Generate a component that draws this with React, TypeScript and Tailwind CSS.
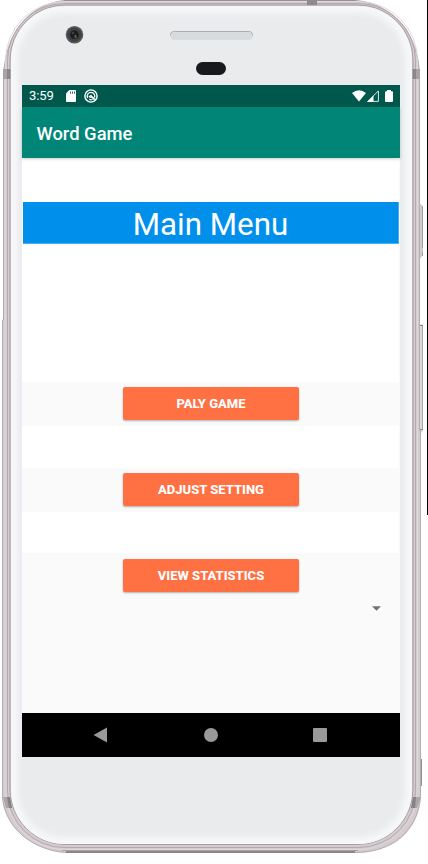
import React from "react";

function DeviceFrame() {
  return (
    <svg className="absolute inset-0" width="428" height="864" viewBox="0 0 428 864" aria-hidden="true">
      <defs>
        <filter id="soft" x="-5%" y="-5%" width="110%" height="110%" colorInterpolationFilters="sRGB">
          <feGaussianBlur stdDeviation="3" />
        </filter>
        <clipPath id="face">
          <rect x="11" y="6" width="401" height="838" rx="54" />
        </clipPath>
      </defs>
      {/* side keys */}
      <path d="M419 204h2l2 3v47l-2 4h-2z" fill="#cdcfcf" />
      <path d="M422.500 206v42M422.500 252v4" stroke="#9b9f9e" />
      <path d="M419 324h3l1 2v105l-2 2h-2z" fill="#d9dddc" />
      <path d="M422.500 326v104" stroke="#a3a7a5" />
      <path d="M419 325.500h4M419 429.500h4" stroke="#858886" />
      <path d="M421.500 759v27" stroke="#929292" />
      {/* metal rim */}
      <path d="M64 0H356C394 4 420 34 420 78V430H421V796C419 832 392 853 355 853H66C30 850 3 825 2 795V320H3V78C5 32 29 5 64 0Z" fill="#d4cccf" />
      <path d="M64 .5H356C393 4 419.500 34 419.500 78V430H420.500V796C418 832 391 852.500 355 852.500H66C30 850 3 825 2.500 795V320H3.500V78C5 32 29 5 64 .5Z" fill="none" stroke="#b5adb0" />
      <path d="M62 850.500H358" stroke="#aaa2a6" />
      <path d="M66 852H355" stroke="#8d858a" strokeWidth="2" />
      <rect x="7.500" y="3.500" width="408" height="844" rx="57" fill="none" stroke="#b1a9ad" />
      <rect x="5.500" y="1.500" width="412" height="848" rx="59" fill="none" stroke="#dfd8db" />
      <rect x="10" y="5" width="403" height="839.500" rx="55" fill="none" stroke="#a69ea2" />
      <rect x="11" y="6" width="401" height="838" rx="54" fill="#e9ebed" />
      <g clipPath="url(#face)">
        <rect x="11" y="6" width="401" height="838" rx="54" fill="none" stroke="#f6f7f9" strokeWidth="14" filter="url(#soft)" />
      </g>
      <path d="M64 .5H356" stroke="#989094" />
      {/* antenna breaks */}
      <path d="M307 0h10v5h-10z" fill="#918a8d" />
      <path d="M3 69h8v10H3zM412 69h8v10h-8z" fill="#aaa3a6" />
      <path d="M7 69h3v10H7zM413 69h3v10h-3z" fill="#8d868a" />
      <path d="M3 797h7l2 11H6zM414 797h7l-4 11h-6z" fill="#aca6a8" />
      <path d="M7 797h3l2 11H9zM413 797h3l-1 11h-4z" fill="#888185" />
      {/* camera and earpiece */}
      <circle cx="74.500" cy="34.700" r="8.800" fill="#55565a" />
      <circle cx="74.500" cy="34.700" r="7" fill="#3f4042" />
      <circle cx="74.500" cy="34.700" r="4.300" fill="#1b1c1f" />
      <circle cx="73" cy="33" r="1.300" fill="#394050" />
      <path d="M74.500 35h2v3h-2z" fill="#66602c" />
      <rect x="170" y="31" width="83" height="9" rx="4.500" fill="#dadde0" />
      <path d="M170.500 35.500c0-3 1.500-4 4-4h74c2.500 0 4 1 4 4" fill="none" stroke="#a9afb6" />
      <path d="M173 34.500h77M173 37h77" stroke="#ced2d7" strokeDasharray="1 1" />
      <rect x="196" y="62" width="30" height="13" rx="6.500" fill="#17191d" />
      {/* line along the right edge of the page */}
      <path d="M427.500 0v515" stroke="#000" />
    </svg>
  );
}

function StatusBar() {
  return (
    <div className="flex h-[22px] items-center bg-[#00574b] pl-[7px] pr-[7px] text-white">
      <span className="w-[37px] text-[13px] leading-[22px] tracking-[-0.1px]">3:59</span>
      <svg width="10" height="12" viewBox="0 0 10 12" aria-hidden="true">
        <path d="M3.300 0H9q1 0 1 1v10q0 1-1 1H1q-1 0-1-1V3.500Z" fill="#fff" />
        <path d="M4.500 1.500v2.300M6.500 1.500v2.300M8.500 1.500v2.300" stroke="#00574b" strokeWidth="0.8" />
      </svg>
      <svg className="ml-[8px]" width="14" height="14" viewBox="0 0 14 14" fill="none" stroke="#fff" aria-hidden="true">
        <circle cx="7" cy="7" r="6.100" strokeWidth="1.400" />
        <path d="M3.700 9A4 4 0 0 1 4 4.600Q6.500 2.200 9.300 4.100Q11.400 6 10.500 8.500M5.300 10.400q1.700.8 3.200.1" strokeWidth="1.200" />
        <path d="m6.300 6.300 4.400 4.400" strokeWidth="1.900" />
        <path d="M5 6.700q.2 1.700 2 1.800" strokeWidth="1.200" />
      </svg>
      <div className="ml-auto flex items-center">
        <svg width="14" height="12" viewBox="0 0 14 12" aria-hidden="true">
          <path d="M0 3Q7-2.500 14 3L7 11.500Z" fill="#fff" />
        </svg>
        <svg className="ml-[1px]" width="12" height="12" viewBox="0 0 12 12" aria-hidden="true">
          <path d="M11.400.9V11.400H.9Z" fill="none" stroke="#dce9e7" strokeWidth="1" />
          <path d="M6.500 5.500V12H0Z" fill="#fff" />
        </svg>
        <svg className="ml-[6px]" width="8" height="12" viewBox="0 0 8 12" aria-hidden="true">
          <path d="M2 0h4v1.200h1q1 0 1 1V11q0 1-1 1H1q-1 0-1-1V2.200q0-1 1-1h1Z" fill="#fff" />
        </svg>
      </div>
    </div>
  );
}

function MenuButton({ label }: { label: string }) {
  return (
    <button className="h-[33px] w-[176px] rounded-[2px] bg-[#ff7043] text-center text-[13px] font-extrabold leading-[34px] text-white shadow-[0_1px_2px_rgba(0,0,0,0.3)]">
      {label}
    </button>
  );
}

export default function App() {
  return (
    <div className="relative h-[864px] w-[428px] overflow-hidden bg-white pl-[22px] pt-[85px] font-['Roboto',sans-serif]">
      <DeviceFrame />
      <main className="relative flex h-[672px] w-[378px] flex-col bg-[#fafafa]">
        <StatusBar />
        <header className="relative h-[51px] bg-[#008577] pl-[14.500px] text-[18.400px] font-medium leading-[53px] text-white shadow-[0_1px_3px_rgba(0,0,0,0.2)]">
          Word Game
        </header>
        <section className="mr-[1px] h-[224px] bg-white pl-[1px] pt-[44px]">
          <h1 className="h-[42px] border-b border-r border-[#49adf2] bg-[#0090eb] text-center text-[31.300px] leading-[45px] text-white">
            Main Menu
          </h1>
        </section>
        <div className="flex h-[44px] justify-center pt-[5px]">
          <MenuButton label="PALY GAME" />
        </div>
        <div className="mr-[1px] h-[42px] bg-white" />
        <div className="flex h-[44px] justify-center pt-[5px]">
          <MenuButton label="ADJUST SETTING" />
        </div>
        <div className="mr-[1px] h-[41px] bg-white" />
        <div className="flex justify-center pt-[6px]">
          <MenuButton label="VIEW STATISTICS" />
        </div>
        <div className="mt-[14px] flex justify-end pr-[19px]">
          <svg width="9" height="5" viewBox="0 0 9 5" aria-hidden="true">
            <path d="M0 .2h9L4.500 4.800Z" fill="#737373" />
          </svg>
        </div>
        <nav className="mt-auto flex h-[44px] items-center bg-black pl-[71px]">
          <svg width="14" height="16" viewBox="0 0 14 16" aria-hidden="true">
            <path d="M14 .5v15L.5 8Z" fill="#999" />
          </svg>
          <span className="ml-[97px] size-[13.500px] rounded-full bg-[#999]" />
          <span className="ml-[95px] size-[14px] rounded-[1px] bg-[#999]" />
        </nav>
      </main>
    </div>
  );
}
